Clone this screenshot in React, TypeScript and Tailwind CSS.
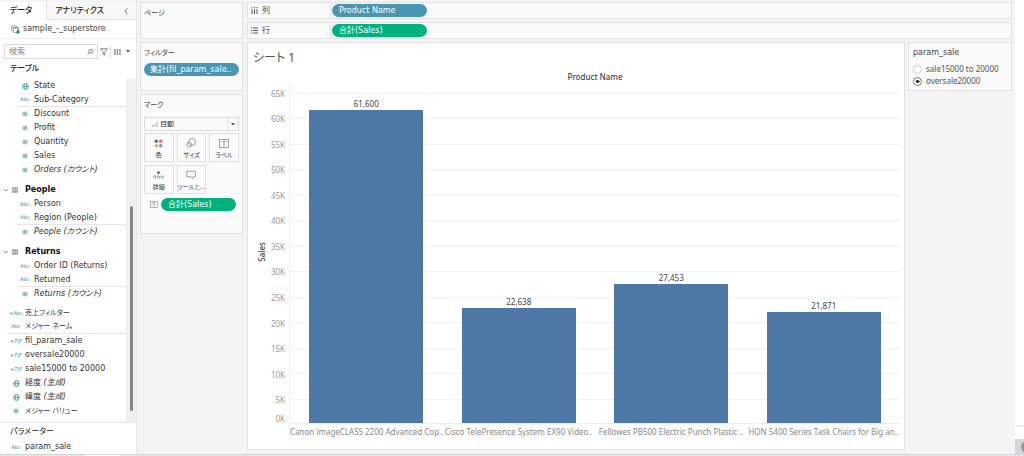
import type { ReactNode } from 'react';

type FieldKind = 'geo' | 'text' | 'number' | 'calcText' | 'calcBool' | 'geoMeasure';

interface Field {
  kind: FieldKind;
  name: string;
  note?: string;
  italic?: boolean;
  small?: boolean;
  divider?: boolean;
}

interface TableGroup {
  name: string;
  fields: Field[];
}

const superstoreFields: Field[] = [
  { kind: 'geo', name: 'State' },
  { kind: 'text', name: 'Sub-Category', divider: true },
  { kind: 'number', name: 'Discount' },
  { kind: 'number', name: 'Profit' },
  { kind: 'number', name: 'Quantity' },
  { kind: 'number', name: 'Sales' },
  { kind: 'number', name: 'Orders (カウント)', italic: true }
];

const groups: TableGroup[] = [
  {
    name: 'People',
    fields: [
      { kind: 'text', name: 'Person' },
      { kind: 'text', name: 'Region (People)', divider: true },
      { kind: 'number', name: 'People (カウント)', italic: true }
    ]
  },
  {
    name: 'Returns',
    fields: [
      { kind: 'text', name: 'Order ID (Returns)' },
      { kind: 'text', name: 'Returned', divider: true },
      { kind: 'number', name: 'Returns (カウント)', italic: true }
    ]
  }
];

const looseFields: Field[] = [
  { kind: 'calcText', name: '売上フィルター', small: true },
  { kind: 'text', name: 'メジャー ネーム', small: true, divider: true },
  { kind: 'calcBool', name: 'fil_param_sale' },
  { kind: 'calcBool', name: 'oversale20000' },
  { kind: 'calcBool', name: 'sale15000 to 20000' },
  { kind: 'geoMeasure', name: '経度', note: '(生成)' },
  { kind: 'geoMeasure', name: '緯度', note: '(生成)' },
  { kind: 'number', name: 'メジャー バリュー', small: true }
];

const bars = [
  { name: 'Canon imageCLASS 2200 Advanced Cop..', value: 61600 },
  { name: 'Cisco TelePresence System EX90 Video..', value: 22638 },
  { name: 'Fellowes PB500 Electric Punch Plastic ..', value: 27453 },
  { name: 'HON 5400 Series Task Chairs for Big an..', value: 21871 }
];

const AXIS_MAX = 65000;
const ticks = ['65K', '60K', '55K', '50K', '45K', '40K', '35K', '30K', '25K', '20K', '15K', '10K', '5K'];

function GlobeIcon({ className }: { className: string }) {
  return (
    <svg className={`w-[7px] h-[7px] ${className}`} viewBox="0 0 14 14" fill="none" stroke="currentColor" strokeWidth={1.6}>
      <circle cx="7" cy="7" r="5.8" />
      <ellipse cx="7" cy="7" rx="2.6" ry="5.8" />
      <path d="M1.2 7h11.6" />
    </svg>
  );
}

function HashIcon() {
  return (
    <svg className="w-[6px] h-[6px] text-[#4fa688]" viewBox="0 0 12 12" fill="none" stroke="currentColor" strokeWidth={1.4}>
      <path d="M4.2 1v10M7.8 1v10M0.5 4.2h11M0.5 7.800h11" />
    </svg>
  );
}

function FieldIcon({ kind }: { kind: FieldKind }) {
  switch (kind) {
    case 'geo':
      return <GlobeIcon className="text-[#4996b2]" />;
    case 'geoMeasure':
      return <GlobeIcon className="text-[#3fae85]" />;
    case 'number':
      return <HashIcon />;
    case 'calcText':
      return <span className="text-[5px] text-[#2f86a6]">=Abc</span>;
    case 'calcBool':
      return <span className="text-[5px] italic text-[#2f86a6]">=T|F</span>;
    default:
      return <span className="text-[5px] text-[#2f86a6]">Abc</span>;
  }
}

function FieldRow({ field, nested }: { field: Field; nested?: boolean }) {
  return (
    <li className={`flex h-[14px] items-center whitespace-nowrap ${nested ? 'ml-[17px]' : 'ml-2'} ${field.divider ? 'border-b border-[#e6e6e6]' : ''}`}>
      <span className="mr-px flex w-4 shrink-0 items-center justify-center">
        <FieldIcon kind={field.kind} />
      </span>
      <span className={`${field.italic ? 'italic' : ''} ${field.small ? 'text-[7px]' : ''}`}>
        {field.name}
        {field.note && <i> {field.note}</i>}
      </span>
    </li>
  );
}

function TableIcon() {
  return (
    <svg className="w-[6px] h-[6px] text-[#777]" viewBox="0 0 12 12" fill="none" stroke="currentColor" strokeWidth={1.2}>
      <rect x="0.8" y="0.8" width="10.4" height="10.4" rx="1" />
      <path d="M1 3.2h10M1 6h10M1 8.8h10M6 3v8" />
    </svg>
  );
}

function DataPane() {
  return (
    <aside className="flex w-[137px] shrink-0 flex-col border-r border-[#e6e6e6] bg-white">
      <div className="h-[2px] shrink-0 bg-[#f4f4f4]" />
      <div className="flex h-[18px] shrink-0 bg-[#f7f7f7]">
        <button className="w-[46px] bg-white pr-1 font-medium text-[#222]">データ</button>
        <button className="flex-1 whitespace-nowrap border-b border-l border-[#e6e6e6] pr-3 font-medium text-[#222]">アナリティクス</button>
        <button aria-label="折りたたむ" className="w-3 border-b border-[#e6e6e6] text-[#555]">
          <svg className="mr-auto h-[6px] w-1" viewBox="0 0 8 12" fill="none" stroke="currentColor" strokeWidth={1.6}>
            <path d="M6.5 1L2 6l4.5 5" />
          </svg>
        </button>
      </div>
      <div className="flex h-[19px] shrink-0 items-center gap-[3px] border-b border-[#eee] pl-[11px]">
        <svg className="h-[9px] w-[9px]" viewBox="0 0 18 18" fill="none" stroke="#777" strokeWidth={1.3}>
          <ellipse cx="6" cy="3.5" rx="5" ry="2.2" />
          <path d="M1 3.5v7c0 1 1.4 1.8 3 2.1M11 3.5v1" />
          <rect x="5" y="6" width="8" height="9" rx="1.5" />
          <path d="M8 6V4.5h7v8" />
          <circle cx="14" cy="14" r="3.4" fill="#2f7da1" stroke="none" />
        </svg>
        <span className="text-[#444]">sample_-_superstore</span>
      </div>
      <div className="flex shrink-0 items-center pt-[5px] pl-1">
        <label className="flex h-[15px] w-[94px] items-center border border-[#d9d9d9] px-1">
          <input type="text" aria-label="検索" placeholder="検索" className="w-full min-w-0 bg-transparent outline-none placeholder:text-[#888]" />
          <svg className="h-[6px] w-[6px] shrink-0" viewBox="0 0 12 12" fill="none" stroke="#555" strokeWidth={1.5}>
            <circle cx="7.3" cy="4.7" r="3.7" />
            <path d="M4.5 7.5L1 11" />
          </svg>
        </label>
        <button aria-label="フィルター" className="ml-[2px]">
          <svg className="h-2 w-2" viewBox="0 0 16 16" fill="none" stroke="#666" strokeWidth={1.6}>
            <path d="M1 1.5h14L9.5 8v6.5l-3-2V8z" />
          </svg>
        </button>
        <span className="mr-[3px] ml-[2px] h-3 w-px bg-[#ddd]" />
        <button aria-label="表示" className="flex items-center gap-[5px]">
          <svg className="h-[6px] w-[7px]" viewBox="0 0 14 12" fill="none" stroke="#888" strokeWidth={3}>
            <path d="M2 0v12M7 0v12M12 0v12" />
            <path d="M0 4h14M0 8h14" stroke="#fff" strokeWidth={0.7} />
          </svg>
          <svg className="h-[3px] w-1" viewBox="0 0 8 6" fill="#555">
            <path d="M0 0h8L4 5z" />
          </svg>
        </button>
      </div>

      <h2 className="flex h-5 shrink-0 items-center pl-[10px] font-medium text-[#222]">テーブル</h2>

      <div className="flex min-h-0 flex-1">
        <div className="min-w-0 flex-1 overflow-hidden">
          <ul>
            {superstoreFields.map((field) => (
              <FieldRow key={field.name} field={field} nested />
            ))}
          </ul>
          {groups.map((group) => (
            <section key={group.name} className="mt-[6px]">
              <h3 className="flex h-[14px] items-center font-bold text-[#111]">
                <svg className="ml-1 h-1 w-1" viewBox="0 0 8 8" fill="none" stroke="#777" strokeWidth={1.6}>
                  <path d="M0.5 2L4 6l3.5-4" />
                </svg>
                <span className="mr-[7px] ml-1">
                  <TableIcon />
                </span>
                {group.name}
              </h3>
              <ul>
                {group.fields.map((field) => (
                  <FieldRow key={field.name} field={field} nested />
                ))}
              </ul>
            </section>
          ))}
          <ul className="mt-[5px]">
            {looseFields.map((field) => (
              <FieldRow key={field.name} field={field} />
            ))}
          </ul>
        </div>
        {/* Scrollbar */}
        <div className="flex w-[10px] shrink-0 flex-col items-center bg-[#f0f0f0]">
          <div className="flex-[127]" />
          <div className="w-[3px] flex-[206] rounded-full bg-[#858585]" />
          <div className="flex-[11]" />
        </div>
      </div>

      <section className="h-8 shrink-0 border-t border-[#e6e6e6]">
        <h2 className="flex h-[17px] items-center pl-[10px] text-[#222]">パラメーター</h2>
        <ul>
          <FieldRow field={{ kind: 'text', name: 'param_sale' }} />
        </ul>
      </section>
    </aside>
  );
}

function Card({ title, className, children }: { title: string; className: string; children?: ReactNode }) {
  return (
    <section className={`border border-[#e2e2e2] bg-[#fafafa] px-[3px] ${className}`}>
      <h2 className="flex h-5 items-center text-[7px] text-[#444]">{title}</h2>
      {children}
    </section>
  );
}

function LabelGlyph() {
  return (
    <svg className="h-full w-full" viewBox="0 0 20 18" fill="none" stroke="#888" strokeWidth={1.6}>
      <rect x="1" y="1" width="18" height="16" />
      <path d="M6.5 6.5V5h7v1.5M10 5v8M8.5 13h3" />
    </svg>
  );
}

const markButtons: { label: string; icon: ReactNode }[] = [
  {
    label: '色',
    icon: (
      <svg className="h-[9px] w-[9px]" viewBox="0 0 18 18">
        <circle cx="4.5" cy="4.5" r="3.6" fill="#7c6390" />
        <circle cx="13.5" cy="4.5" r="3.6" fill="#f06a6e" />
        <circle cx="4.5" cy="13.5" r="3.6" fill="#f5a261" />
        <circle cx="13.5" cy="13.5" r="3.6" fill="#6f9fd0" />
      </svg>
    )
  },
  {
    label: 'サイズ',
    icon: (
      <svg className="h-[10px] w-[10px]" viewBox="0 0 20 20" fill="none" stroke="#888" strokeWidth={1.6}>
        <circle cx="12" cy="8" r="7" />
        <circle cx="6.5" cy="13.5" r="4.8" />
      </svg>
    )
  },
  {
    label: 'ラベル',
    icon: (
      <span className="h-[9px] w-[10px]">
        <LabelGlyph />
      </span>
    )
  },
  {
    label: '詳細',
    icon: (
      <svg className="h-2 w-[11px]" viewBox="0 0 22 16" fill="none" stroke="#888" strokeWidth={1.5}>
        <circle cx="11" cy="3.5" r="2.8" fill="#666" stroke="none" />
        <circle cx="3.5" cy="12" r="2.4" />
        <circle cx="11" cy="12" r="2.4" />
        <circle cx="18.5" cy="12" r="2.4" />
      </svg>
    )
  },
  {
    label: 'ツールと…',
    icon: (
      <svg className="h-[10px] w-[10px]" viewBox="0 0 20 20" fill="none" stroke="#888" strokeWidth={1.6}>
        <path d="M1.5 2.5h17v11h-4v4l-4-4h-9z" />
      </svg>
    )
  }
];

function MarksCard() {
  return (
    <Card title="マーク" className="h-[140px]">
      <div className="mt-[2px] flex h-[14px] items-center border border-[#dcdcdc] pl-[7px]">
        <svg className="h-[5px] w-[6px]" viewBox="0 0 12 10" fill="none" stroke="#999" strokeWidth={1.6}>
          <path d="M1.5 10V6M6 10V4M10.5 10V0" />
        </svg>
        <select aria-label="マークの種類" className="ml-[2px] h-full min-w-0 flex-1 appearance-none bg-transparent text-[7px] text-[#333] outline-none">
          <option>自動</option>
        </select>
        <span className="flex h-full w-[11px] items-center justify-center border-l border-[#e8e8e8]">
          <svg className="h-[3px] w-1" viewBox="0 0 8 6" fill="#555">
            <path d="M0 0h8L4 5z" />
          </svg>
        </span>
      </div>
      <div className="mt-[2px] grid grid-cols-3 gap-x-[3px] gap-y-[3px]">
        {markButtons.map(({ label, icon }) => (
          <button key={label} className="flex h-[29px] min-w-0 flex-col items-center border border-[#e0e0e0] pt-[3px] text-[6px] text-[#333]">
            <span className="flex h-3 items-center">{icon}</span>
            <span className="pt-px leading-[10px] whitespace-nowrap">{label}</span>
          </button>
        ))}
      </div>
      <div className="mt-1 flex items-center pl-[6px]">
        <span className="h-[7px] w-2">
          <LabelGlyph />
        </span>
        <button className="ml-[3px] h-[13px] w-[75px] rounded-full bg-[#00b180] pl-[7px] text-left text-white">合計(Sales)</button>
      </div>
    </Card>
  );
}

function Shelf({ label, icon, pill, pillClass }: { label: string; icon: ReactNode; pill: string; pillClass: string }) {
  return (
    <div className="flex h-[17px] shrink-0 items-center border border-[#e2e2e2] bg-[#fafafa]">
      <div className="flex h-full w-[83px] items-center gap-1 border-r border-[#e2e2e2] pl-[3px] text-[#444]">
        {icon}
        {label}
      </div>
      <button className={`ml-px h-[13px] w-[95px] rounded-full pl-[7px] text-left text-white ${pillClass}`}>{pill}</button>
    </div>
  );
}

function BarChart() {
  return (
    <div className="flex min-h-0 flex-1 pl-2 font-['Noto_Sans','Noto_Sans_CJK_JP',sans-serif]">
      <div className="flex w-3 shrink-0 items-center justify-center pb-[26px] font-medium text-[#444] [writing-mode:vertical-rl]">
        <span className="rotate-180">Sales</span>
      </div>
      <div className="flex w-[21px] shrink-0 flex-col pr-1 pb-6 text-right text-[#999]">
        {ticks.map((tick) => (
          <div key={tick} className="flex flex-1 items-center justify-end">
            {tick}
          </div>
        ))}
        <div className="h-3 leading-3">0K</div>
      </div>
      <div className="flex min-w-0 flex-1 flex-col pt-[3px] pr-1 pb-[10px]">
        <div className="relative flex flex-1 flex-col border-l border-[#f0f0f0] pt-[9px]">
          {ticks.map((tick) => (
            <div key={tick} className="flex-1 border-t border-[#f3f3f3]" />
          ))}
          {/* Bars sit on top of the grid lines */}
          <div className="absolute inset-x-0 top-[9px] bottom-0 grid grid-cols-4 border-b border-[#eee]">
            {bars.map((bar) => (
              <div key={bar.name} className="flex h-full min-h-0 flex-col items-center justify-end">
                <span className="leading-[13px] text-[#444]">{bar.value.toLocaleString('en-US')}</span>
                <div className="w-3/4 shrink-0 bg-[#4e79a7]" style={{ height: `${(bar.value / AXIS_MAX) * 100}%` }} />
              </div>
            ))}
          </div>
        </div>
        <div className="grid h-[15px] grid-cols-4 border-l border-[#f0f0f0] text-[#888]">
          {bars.map((bar) => (
            <span key={bar.name} className="min-w-0 text-center leading-[15px] whitespace-nowrap">{bar.name}</span>
          ))}
        </div>
      </div>
    </div>
  );
}

function ParameterCard() {
  return (
    <fieldset className="h-[49px] w-[104px] shrink-0 border border-[#e2e2e2] bg-[#fafafa] px-1 text-[#555]">
      <legend className="float-left flex h-5 w-full items-center text-[#444]">param_sale</legend>
      <div className="clear-both font-['Noto_Sans',sans-serif]">
        {['sale15000 to 20000', 'oversale20000'].map((option) => (
          <label key={option} className="flex h-3 items-center gap-1 whitespace-nowrap">
            <input
              type="radio"
              name="param_sale"
              defaultChecked={option === 'oversale20000'}
              className="h-[9px] w-[9px] appearance-none rounded-full border border-[#ccc] bg-white checked:border-[#777] checked:bg-[radial-gradient(circle,#444_0_2px,#fff_2px)]"
            />
            {option}
          </label>
        ))}
      </div>
    </fieldset>
  );
}

export default function App() {
  return (
    <div className="flex h-screen flex-col overflow-hidden bg-[#f4f4f4] font-['DejaVu_Sans','Noto_Sans_CJK_JP',sans-serif] text-[8px] leading-none text-[#333] [font-feature-settings:'palt']">
      <div className="flex min-h-0 flex-1">
        <DataPane />

        <div className="ml-[3px] flex w-[103px] shrink-0 flex-col gap-[3px] pt-[2px]">
          <Card title="ページ" className="h-[37px]" />
          <Card title="フィルター" className="h-[49px]">
            <button className="h-[13px] w-full rounded-full bg-[#4996b2] pl-[6px] text-left whitespace-nowrap text-white">集計(fil_param_sale..</button>
          </Card>
          <MarksCard />
        </div>

        <main className="mr-[3px] ml-1 flex min-w-0 flex-1 flex-col gap-[3px] pt-[2px] pb-1">
          <Shelf
            label="列"
            pill="Product Name"
            pillClass="bg-[#4996b2]"
            icon={
              <svg className="h-[7px] w-[7px]" viewBox="0 0 14 14" fill="none" stroke="#555" strokeWidth={2}>
                <path d="M2 0v2.5M7 0v2.5M12 0v2.5M2 4.5V14M7 4.5V14M12 4.5V14" />
              </svg>
            }
          />
          <Shelf
            label="行"
            pill="合計(Sales)"
            pillClass="bg-[#00b180]"
            icon={
              <svg className="h-[7px] w-[7px]" viewBox="0 0 14 14" fill="none" stroke="#555" strokeWidth={2}>
                <path d="M0 2h2.5M0 7h2.5M0 12h2.5M4.5 2H14M4.5 7H14M4.5 12H14" />
              </svg>
            }
          />
          <div className="flex min-h-0 flex-1 items-start gap-[3px]">
            <section className="flex h-full min-w-0 flex-1 flex-col border border-[#e2e2e2] bg-white">
              <h1 className="flex h-[30px] shrink-0 items-center pl-[5px] font-['Noto_Sans','Noto_Sans_CJK_JP',sans-serif] text-xs text-[#555]">シート 1</h1>
              <p className="h-2 shrink-0 pl-[38px] text-center font-['Noto_Sans',sans-serif] font-medium text-[#444]">Product Name</p>
              <BarChart />
            </section>
            <ParameterCard />
          </div>
        </main>

        <div className="flex w-[9px] shrink-0 flex-col overflow-hidden bg-white">
          <div className="flex-1" />
          <div className="h-[14px] border-t-2 border-[#eee]" />
          <div className="flex h-[15px] items-center bg-[#d6d6da] pl-[6px]">
            <span className="h-3 w-3 shrink-0 rounded-full bg-[#8995a8]" />
          </div>
        </div>
      </div>
      <footer className="flex h-[2px] shrink-0 border-t border-[#d5d5d5] bg-[#e6e6e6]">
        <span className="ml-[85px] h-full w-[35px] bg-white" />
      </footer>
    </div>
  );
}
